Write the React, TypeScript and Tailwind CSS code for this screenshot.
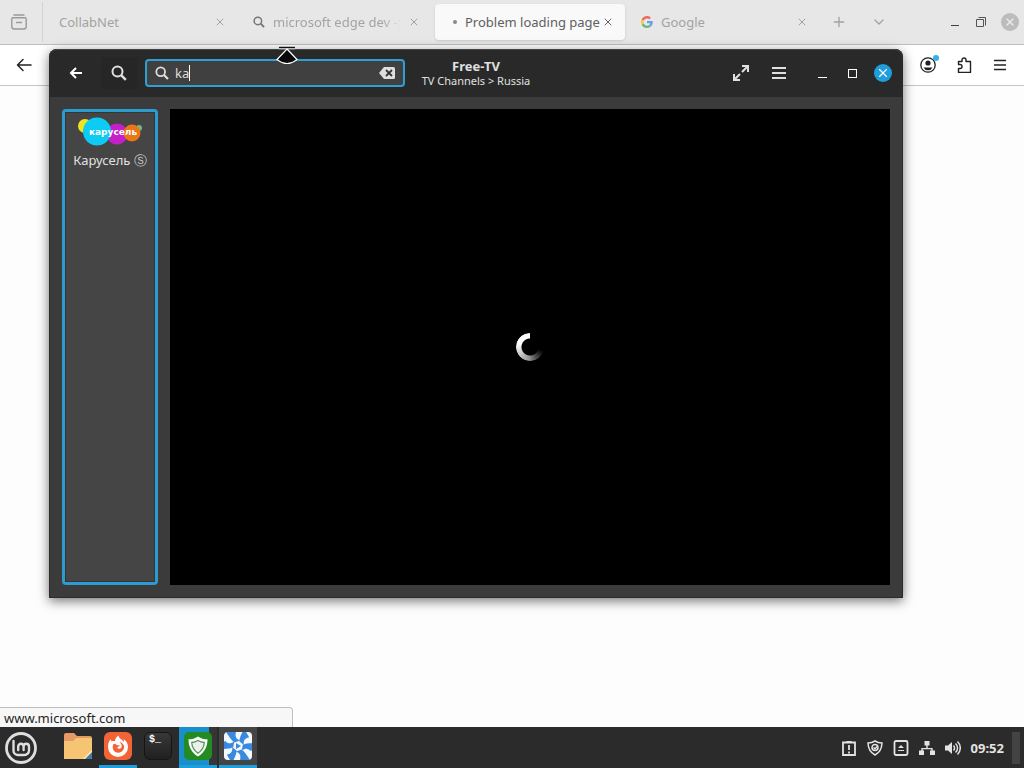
import { useState } from "react";
import type { ReactNode } from "react";
import { ChevronDown, Plus, X } from "lucide-react";

const tabs = [
  { title: "CollabNet", icon: "none" },
  { title: "microsoft edge dev -:", icon: "search" },
  { title: "Problem loading page", icon: "dot", active: true },
  { title: "Google", icon: "google" },
];

function SearchIcon({ className }: { className: string }) {
  return (
    <svg viewBox="0 0 16 16" className={className} fill="none" stroke="currentColor" aria-hidden="true">
      <circle cx="6.500" cy="6.500" r="5" strokeWidth="2" />
      <path d="m10.300 10.300 4.500 4.500" strokeWidth="2.500" />
    </svg>
  );
}

function GoogleIcon() {
  return (
    <svg viewBox="0 0 24 24" className="size-3 shrink-0 opacity-75">
      <path fill="#4285f4" d="M23.5 12.3c0-.9-.1-1.500-.2-2.300H12v4.600h6.500c-.3 1.500-1.100 2.800-2.400 3.600l3.900 3c2.200-2.100 3.500-5.200 3.500-8.900z" />
      <path fill="#34a853" d="M12 24c3.200 0 5.900-1.100 8-2.900l-3.900-3c-1.100.7-2.500 1.200-4.100 1.200-3.100 0-5.800-2.100-6.700-5l-4 3.100C3.300 21.400 7.300 24 12 24z" />
      <path fill="#fbbc05" d="M5.300 14.300a7 7 0 0 1 0-4.600l-4-3.100a12 12 0 0 0 0 10.800z" />
      <path fill="#ea4335" d="M12 4.800c1.800 0 3.300.6 4.600 1.800L20 3.200C17.900 1.200 15.200 0 12 0 7.300 0 3.300 2.700 1.300 6.600l4 3.100c.9-2.900 3.600-4.900 6.700-4.900z" />
    </svg>
  );
}

function TabIcon({ icon }: { icon: string }) {
  if (icon === "search") {
    return <SearchIcon className="size-3 shrink-0 text-[#777]" />;
  }
  if (icon === "google") {
    return <GoogleIcon />;
  }
  if (icon === "dot") {
    return <span className="ml-1 size-1 shrink-0 rounded-full bg-[#888]" />;
  }
  return null;
}

function BrowserTabs() {
  return (
    <div className="flex h-[45px] items-center border-b border-[#bdbdbd] bg-[#e7e7e7] text-[#a3a3a3]">
      <button aria-label="Firefox View" className="flex h-10 w-[43px] shrink-0 items-center justify-center border-r border-[#d2d2d2] pr-1">
        <svg viewBox="0 0 16 16" className="size-4" fill="none" stroke="#9a9a9a" strokeWidth="1.400" strokeLinecap="round">
          <path d="M3 1h10M2 3.800h12a1.200 1.200 0 0 1 1.200 1.200v7.500A2.500 2.500 0 0 1 12.700 15H3.300A2.500 2.500 0 0 1 .8 12.500V5A1.200 1.200 0 0 1 2 3.800zM5.500 8.500h5" />
        </svg>
      </button>

      <div className="ml-1 flex min-w-0 flex-1 gap-1">
        {tabs.map((t) => (
          <div
            key={t.title}
            className={
              t.active
                ? "flex h-9 max-w-[190px] min-w-0 flex-1 items-center rounded bg-[#f9f9f9] pr-[11px] pl-[14px] text-[#606060] shadow"
                : "flex h-9 max-w-[190px] min-w-0 flex-1 items-center pr-[11px] pl-3"
            }
          >
            <a href="#" className="flex min-w-0 flex-1 items-center gap-2">
              <TabIcon icon={t.icon} />
              <span
                className={
                  t.icon === "search"
                    ? "mask-r-from-85% whitespace-nowrap"
                    : "whitespace-nowrap"
                }
              >
                {t.title}
              </span>
            </a>
            <button aria-label="Close tab" className="shrink-0">
              <X className="size-3" />
            </button>
          </div>
        ))}
        <button aria-label="New tab" className="ml-2">
          <Plus className="size-4" strokeWidth={2} />
        </button>
        <button aria-label="List all tabs" className="ml-5">
          <ChevronDown className="size-4" strokeWidth={2} />
        </button>
      </div>

      <div className="flex shrink-0 items-center gap-[14px] pr-[5px] text-[#555]">
        <button aria-label="Minimize browser" className="flex size-3 items-end justify-center pb-[2px]">
          <span className="h-px w-2 bg-[#444]" />
        </button>
        <button aria-label="Restore browser" className="size-3">
          <svg viewBox="0 0 12 12" fill="none" stroke="currentColor">
            <path d="M1.500 3.500h7v7h-7zM3.500 1.500h7v8" />
          </svg>
        </button>
        <button aria-label="Close browser" className="flex size-[18px] items-center justify-center rounded-full bg-[#bcbcbc] text-[#e9e9e9]">
          <X className="size-3" strokeWidth={3} />
        </button>
      </div>
    </div>
  );
}

function BrowserToolbar() {
  return (
    <div className="flex h-[41px] items-center justify-between border-b border-[#c4c4c4] bg-white px-4 text-[#222]">
      <button aria-label="Go back">
        <svg viewBox="0 0 16 16" className="size-4" fill="none" stroke="currentColor" strokeWidth="1.500" strokeLinecap="round" strokeLinejoin="round">
          <path d="M15 8H1.500M7 2.500 1.500 8 7 13.500" />
        </svg>
      </button>
      <div className="flex items-center gap-5">
        <button aria-label="Account" className="relative">
          <svg viewBox="0 0 16 16" className="size-4">
            <circle cx="8" cy="8" r="7.200" fill="none" stroke="currentColor" strokeWidth="1.300" />
            <circle cx="8" cy="6" r="2.600" fill="currentColor" />
            <path d="M3.500 10.500h9a5 5 0 0 1-9 0z" fill="currentColor" />
          </svg>
          <span className="absolute -top-[2px] -right-[3px] size-[6px] rounded-full bg-[#31b3e6]" />
        </button>
        <button aria-label="Extensions">
          <svg viewBox="0 0 16 16" className="size-4" fill="none" stroke="currentColor" strokeWidth="1.400" strokeLinejoin="round">
            <path d="M2.500 4.500H6V3a2 2 0 0 1 4 0v1.500h4.500v11h-12v-4H4a2 2 0 0 0 0-4H2.500z" />
          </svg>
        </button>
        <button aria-label="Open menu">
          <svg viewBox="0 0 16 16" className="size-4" stroke="currentColor" strokeWidth="1.300">
            <path d="M2 3.500h12M2 8h12M2 12.500h12" />
          </svg>
        </button>
      </div>
    </div>
  );
}

function SearchField() {
  const [query, setQuery] = useState("ka");

  return (
    <div className="ml-2 flex h-7 w-[260px] items-center rounded border-2 border-[#2f9fd4] bg-[#404040] px-2 text-[#dedede]">
      <label htmlFor="search" aria-label="Search channels" className="flex flex-1 items-center">
        <SearchIcon className="mr-[6px] size-[14px]" />
        <input
          id="search"
          type="text"
          aria-label="Search channels"
          value={query}
          onChange={(e) => setQuery(e.currentTarget.value)}
          className="field-sizing-content bg-transparent caret-transparent outline-none"
        />
        <span className="h-4 w-px bg-white" />
      </label>
      <button aria-label="Clear search" onClick={() => setQuery("")}>
        <svg viewBox="0 0 16 12" className="h-3 w-4">
          <path d="M5 0h9.500A1.500 1.500 0 0 1 16 1.500v9a1.500 1.500 0 0 1-1.500 1.500H5L0 6z" fill="#dedede" />
          <path d="m7 3 6 6m0-6L7 9" stroke="#333" strokeWidth="1.800" />
        </svg>
      </button>
    </div>
  );
}

function ChannelLogo() {
  return (
    <div className="relative flex h-[30px] w-16 items-center justify-center">
      <svg viewBox="0 0 64 30" className="absolute inset-0">
        <circle cx="7" cy="9" r="7" fill="#f2e41c" />
        <circle cx="61" cy="11" r="3" fill="#72b986" />
        <circle cx="39" cy="17" r="10.500" fill="#c420c9" />
        <circle cx="54" cy="16" r="8.500" fill="#ec7518" />
        <circle cx="19" cy="14.500" r="14" fill="#0dcbf2" />
      </svg>
      <span className="relative ml-[6px] font-['DejaVu_Sans',sans-serif] text-[9px] leading-4 font-bold text-white">
        карусель
      </span>
    </div>
  );
}

function Spinner() {
  return (
    <div className="flex size-7 items-center justify-center">
      <span className="size-7 -scale-x-100 rounded-full bg-conic/decreasing from-white from-20% via-[#999] via-48% to-black to-75% mask-radial-from-transparent mask-radial-from-[8px] mask-radial-to-black mask-radial-to-[9px]" />
    </div>
  );
}

function TvWindow() {
  return (
    <section className="absolute top-[49px] right-[121px] bottom-[129px] left-[49px] flex flex-col rounded-t-lg bg-[#3b3b3b] text-[#e0e0e0] shadow-[0_3px_12px_rgba(0,0,0,0.55)]">
      <header className="grid h-12 shrink-0 grid-cols-[1fr_auto_1fr] items-center rounded-t-lg bg-[#292929] inset-shadow-[0_1px_#444]">
        <div className="flex items-center pl-[11px]">
          <button aria-label="Back" className="flex size-8 items-center justify-center">
            <svg viewBox="0 0 14 14" className="size-[14px]" fill="none" stroke="white" strokeWidth="2">
              <path d="M13 7H2M7 2 2 7l5 5" />
            </svg>
          </button>
          <button aria-label="Search" className="ml-[9px] flex h-8 w-9 items-center justify-center rounded bg-[#262626]">
            <SearchIcon className="size-4" />
          </button>
          <SearchField />
        </div>

        <div className="text-center">
          <h1 className="text-[13px] leading-[15px] font-bold">Free-TV</h1>
          <p className="text-[11px] leading-[14px]">TV Channels &gt; Russia</p>
        </div>

        <div className="flex items-center justify-end gap-[22px] pr-[11px]">
          <button aria-label="Fullscreen">
            <svg viewBox="0 0 16 16" className="size-4" fill="none" stroke="currentColor" strokeWidth="2">
              <path d="M9 1h6v6M15 1 9 7M7 15H1V9M1 15l6-6" />
            </svg>
          </button>
          <button aria-label="Menu">
            <svg viewBox="0 0 16 16" className="size-4" stroke="currentColor" strokeWidth="2">
              <path d="M1 3h14M1 8h14M1 13h14" />
            </svg>
          </button>
          <div className="ml-[9px] flex items-center gap-[21px]">
            <button aria-label="Minimize" className="flex size-[9px] items-end">
              <span className="h-px w-full bg-white" />
            </button>
            <button aria-label="Maximize" className="size-[9px] border border-white" />
            <button aria-label="Close" className="-ml-1 flex size-[18px] items-center justify-center rounded-full bg-[#1f9ede] text-white">
              <X className="size-[14px]" strokeWidth={2} />
            </button>
          </div>
        </div>
      </header>

      <div className="flex min-h-0 flex-1 gap-3 border border-t-0 border-[#2b2b2b] p-3">
        <aside className="w-24 shrink-0 rounded-sm border-3 border-[#2b9bd0] bg-[#454545]">
          <button className="flex h-full w-full flex-col items-center border border-[#353535] pt-1">
            <ChannelLogo />
            <span className="mt-[3px] leading-5 whitespace-nowrap">
              Карусель <span className="text-[#c8c8c8]">Ⓢ</span>
            </span>
          </button>
        </aside>
        <div className="flex flex-1 items-center justify-center bg-black">
          <Spinner />
        </div>
      </div>
    </section>
  );
}

function TaskButton({ label, className, children }: { label: string; className: string; children: ReactNode }) {
  return (
    <button aria-label={label} className={`flex h-full w-[38px] items-center justify-center border-b-3 ${className}`}>
      {children}
    </button>
  );
}

function Taskbar() {
  return (
    <footer className="flex h-[41px] shrink-0 items-center justify-between bg-[#2b2b2b] text-[#e3e3e3]">
      <div className="flex h-full items-center">
        <button aria-label="Menu" className="mr-[21px] ml-1">
          <svg viewBox="0 0 34 34" className="size-[34px]" fill="none" stroke="#dedede" strokeLinecap="round">
            <circle cx="17" cy="17" r="14.500" strokeWidth="2.800" />
            <path d="M9.500 10v9.500a4.500 4.500 0 0 0 4.500 4.500h6.500a4.500 4.500 0 0 0 4.500-4.500v-4a2.700 2.700 0 0 0-5.400 0V19M19.600 16v-.5a2.700 2.700 0 0 0-5.400 0V19" strokeWidth="2.400" />
          </svg>
        </button>
        <div className="flex h-full gap-[2px]">
          <TaskButton label="Files" className="border-transparent">
            <svg viewBox="0 0 28 26" className="h-[26px] w-7">
              <path d="M0 2a2 2 0 0 1 2-2h8l3 3h13a2 2 0 0 1 2 2v21H0z" fill="#e59a64" />
              <path d="M0 8h9l3-3h16v20a1 1 0 0 1-1 1H1a1 1 0 0 1-1-1z" fill="#f6c574" />
              <path d="m28 18-8 8h7a1 1 0 0 0 1-1z" fill="#477c9b" />
              <path d="m28 17-9 9h2l7-7z" fill="#fff0bd" />
            </svg>
          </TaskButton>
          <TaskButton label="Firefox" className="border-[#1f9ede]">
            <svg viewBox="0 0 28 28" className="size-7">
              <rect width="28" height="28" rx="6" fill="#f26436" />
              <path d="M14.500 3.500c.3 2 1.500 3 3 4 1 .7 1.800 1.500 2.300 2.500.3-1 .2-2-.3-3 3 2 4.500 4.800 4.500 8a10 10 0 0 1-20 0c0-3 .8-5.500 2.500-8 .2 1 .5 1.700 1 2.300 1.300-.5 2.500-.5 3.500-.1.200-2.300 1.200-4.300 3.500-5.700z" fill="#fff" />
              <path d="M9.300 12.300c1.500-.8 2.700-.3 3.700.9h3c-.7 1.500-2.700 1.300-2.800 2.800 1.200 1 2.800 1 4.300-.5.7-2.300-.3-4-2-5.500 3.200.7 5 3.200 4.500 6-.6 3.100-3.200 4.800-6 4.800-3.700 0-6.500-3.800-4.700-8.500z" fill="#f26436" />
            </svg>
          </TaskButton>
          <TaskButton label="Terminal" className="border-transparent">
            <span className="flex size-7 rounded-md border border-[#151515] bg-linear-to-b from-[#383838] to-[#202020] pt-px pl-1 font-['Liberation_Mono',monospace] text-[10px] leading-3 font-bold text-white">
              $_
            </span>
          </TaskButton>
          <TaskButton label="Shield" className="border-[#1f9ede] bg-linear-to-r from-[#1990cc] from-80% to-[#353535] to-80%">
            <svg viewBox="0 0 28 28" className="size-7">
              <rect width="28" height="28" rx="5" fill="#238b22" />
              <path d="M14 4.500c3 2 6 2.800 9.500 2.800 0 7.700-3 13.200-9.500 17.200-6.500-4-9.500-9.500-9.500-17.200 3.500 0 6.500-.8 9.500-2.800z" fill="#fff" />
              <path d="M14 8.500c2 1.200 4 1.800 6.300 2-.3 4.500-2.300 8-6.300 10.700-4-2.700-6-6.200-6.300-10.700 2.300-.2 4.300-.8 6.300-2z" fill="#eee" stroke="#4e9a4d" strokeWidth="1.300" />
            </svg>
          </TaskButton>
          <TaskButton label="Hypnotix" className="border-[#1f9ede] bg-[#454545]">
            <svg viewBox="0 0 28 28" className="size-7 rounded">
              <rect width="28" height="28" fill="#f4f9ff" />
              <g fill="#398ade">
                <path d="M2 0h10c-1 4-.5 6.500 4 8.500l-5.500 2C7.500 8.500 5 4.500 2 0z" />
                <path d="M2 0h10c-1 4-.5 6.500 4 8.500l-5.500 2C7.500 8.500 5 4.500 2 0z" transform="rotate(60 14 14)" />
                <path d="M2 0h10c-1 4-.5 6.500 4 8.500l-5.500 2C7.500 8.500 5 4.500 2 0z" transform="rotate(120 14 14)" />
                <path d="M2 0h10c-1 4-.5 6.500 4 8.500l-5.500 2C7.500 8.500 5 4.500 2 0z" transform="rotate(180 14 14)" />
                <path d="M2 0h10c-1 4-.5 6.500 4 8.500l-5.500 2C7.500 8.500 5 4.500 2 0z" transform="rotate(240 14 14)" />
                <path d="M2 0h10c-1 4-.5 6.500 4 8.500l-5.500 2C7.500 8.500 5 4.500 2 0z" transform="rotate(300 14 14)" />
                <path d="m12 11 5 3-5 3z" />
              </g>
            </svg>
          </TaskButton>
        </div>
      </div>

      <div className="flex items-center gap-[10px] pr-1">
        <button aria-label="Reports">
          <svg viewBox="0 0 16 16" className="size-4" fill="none" stroke="currentColor" strokeWidth="1.800">
            <path d="M2 2.500h12v12.500H2zM5.500 2h5M8 5v5M8 11.500v2" />
          </svg>
        </button>
        <button aria-label="Updates">
          <svg viewBox="0 0 16 16" className="size-4" fill="none" stroke="currentColor" strokeWidth="1.500">
            <path d="M8 1c2 1.300 4.500 2 7 2-.2 5.500-2.300 9.500-7 12-4.700-2.500-6.800-6.500-7-12 2.500 0 5-.7 7-2z" />
            <circle cx="8" cy="7.500" r="3" />
            <path d="M6.500 7.500 8 9l2-2.500" />
          </svg>
        </button>
        <button aria-label="Removable drives">
          <svg viewBox="0 0 16 16" className="size-4" fill="none" stroke="currentColor" strokeWidth="1.800">
            <rect x="1.500" y="1" width="13" height="14" rx="1.500" />
            <path d="m8 5 3 3H5zM5 10h6v1H5z" fill="currentColor" stroke="none" />
          </svg>
        </button>
        <button aria-label="Network">
          <svg viewBox="0 0 16 16" className="size-4" fill="currentColor">
            <path d="M5.500 1h5v4.500H8.700V8h5v2.500H16V15h-5v-4.500h1.300V9.300H3.700v1.200H5V15H0v-4.500h2.300V8h5V5.500H5.500z" />
          </svg>
        </button>
        <button aria-label="Volume">
          <svg viewBox="0 0 16 16" className="size-4" fill="none" stroke="currentColor" strokeWidth="1.500">
            <path d="M0 5.500h3L7 2v12l-4-3.500H0z" fill="currentColor" stroke="none" />
            <path d="M8.500 5.500a3.500 3.500 0 0 1 0 5M10.500 3.500a6 6 0 0 1 0 9M12.500 1.500a9 9 0 0 1 0 13" />
          </svg>
        </button>
        <time className="text-[13px] leading-5 font-bold">09:52</time>
        <button aria-label="Show desktop" className="-ml-[2px] h-8 w-2 bg-[#434343]" />
      </div>
    </footer>
  );
}

export default function App() {
  return (
    <div className="flex h-screen flex-col overflow-hidden bg-[#fdfdfd] font-['Noto_Sans','DejaVu_Sans',sans-serif] text-[13px] leading-5">
      <main className="relative flex min-h-0 flex-1 flex-col">
        <BrowserTabs />
        <BrowserToolbar />
        <div className="flex flex-1 items-end">
          <p className="h-5 w-[293px] rounded-tr border-t border-r border-[#bfbfbf] bg-[#f7f7f7] pl-1 text-[#252525]">
            www.microsoft.com
          </p>
        </div>
        <TvWindow />
        <svg viewBox="0 0 24 20" className="absolute top-[45px] left-[275px] h-5 w-6">
          <path d="M4 2.500h16" stroke="#fff" strokeWidth="3.500" />
          <path d="M4 2.500h16" stroke="#111" strokeWidth="1.600" />
          <path d="m12 4 10 10.500q-10 8-20 0z" fill="#080808" stroke="#fff" strokeWidth="1.200" />
        </svg>
      </main>
      <Taskbar />
    </div>
  );
}
